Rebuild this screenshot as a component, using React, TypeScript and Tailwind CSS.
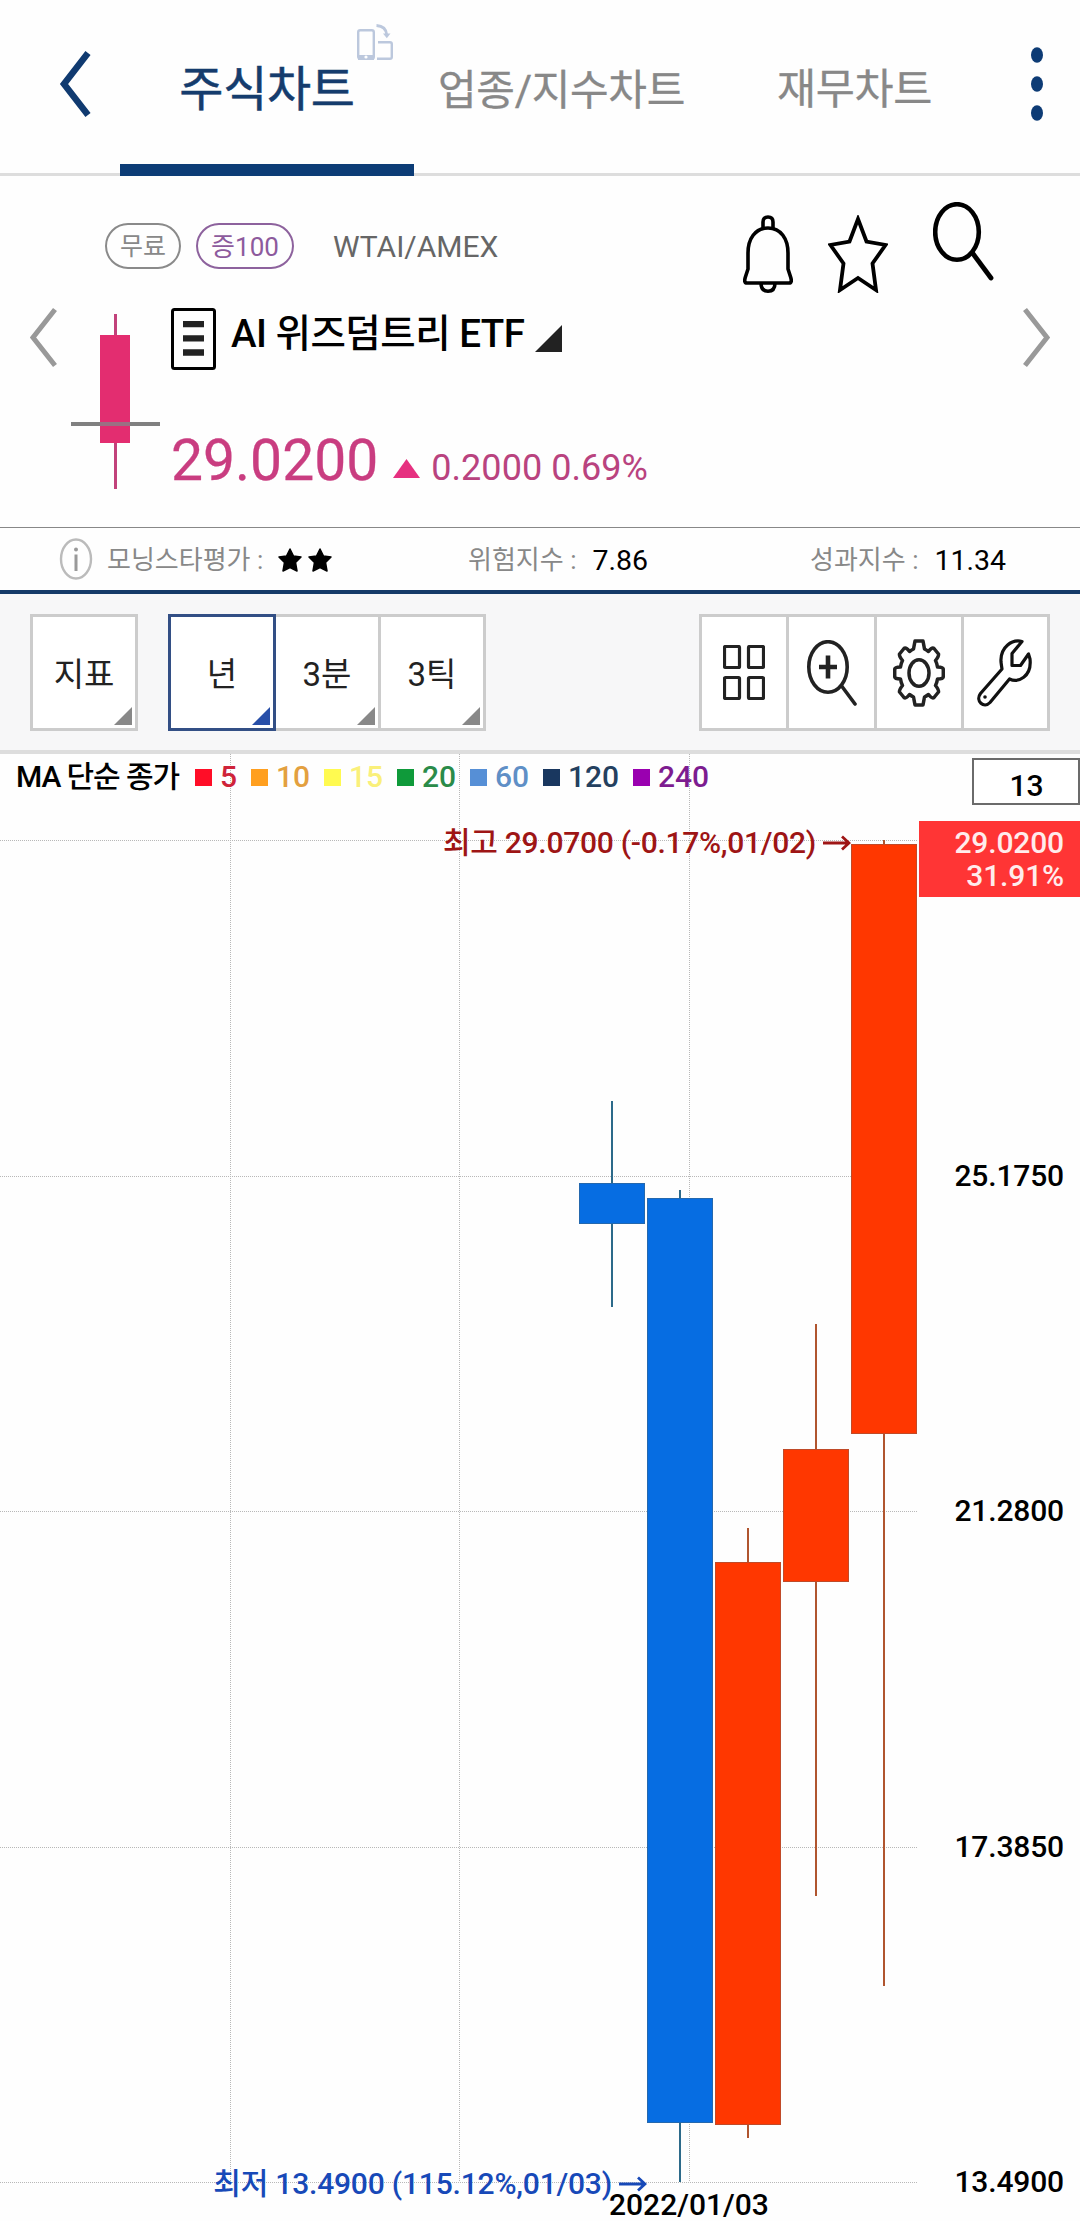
import React from 'react';

const TABS = [
  { label: '주식차트', active: true, cls: 'w-[294px] text-[48px] text-[#153c6d] [-webkit-text-stroke:0.5px]' },
  { label: '업종/지수차트', active: false, cls: 'w-[295px] text-[42px] text-[#888888] [-webkit-text-stroke:0.3px]' },
  { label: '재무차트', active: false, cls: 'w-[291px] text-[42.500px] text-[#888888] [-webkit-text-stroke:0.3px]' },
];

const MA_LINES = [
  { period: 5, box: 'bg-[#ff0d27]', text: 'text-[#cf2339]' },
  { period: 10, box: 'bg-[#ff9f1f]', text: 'text-[#e3a03f]' },
  { period: 15, box: 'bg-[#fffa50]', text: 'text-[#faf07a]' },
  { period: 20, box: 'bg-[#0f9a3a]', text: 'text-[#2a8b49]' },
  { period: 60, box: 'bg-[#568fd6]', text: 'text-[#5f8fc6]' },
  { period: 120, box: 'bg-[#19375f]', text: 'text-[#24405f]' },
  { period: 240, box: 'bg-[#9a00b0]', text: 'text-[#7d1c90]' },
];

const UP = { body: '#ff3700', edge: '#c04a28', wick: '#b0552f' };
const DOWN = { body: '#066de2', edge: '#2468ae', wick: '#2c6a8a' };

// y values are relative to the top of the chart area
const CANDLES = [
  { x: 579, high: 347, top: 429, bottom: 470, low: 553, color: DOWN },
  { x: 647, high: 436, top: 444, bottom: 1369, low: 1428, color: DOWN },
  { x: 715, high: 774, top: 808, bottom: 1371, low: 1384, color: UP },
  { x: 783, high: 570, top: 695, bottom: 828, low: 1142, color: UP },
  { x: 851, high: 86, top: 90, bottom: 680, low: 1232, color: UP },
];

const GRID_Y = [86, 422, 757, 1093, 1428];
const GRID_X = [230, 459, 689];
const AXIS = [
  { label: '25.1750', cls: 'top-[404px]' },
  { label: '21.2800', cls: 'top-[739px]' },
  { label: '17.3850', cls: 'top-[1075px]' },
  { label: '13.4900', cls: 'top-[1410px]' },
];

const Header: React.FC = () => (
  <header className="relative flex h-[176px] border-b-[3px] border-[#dddddd]">
    <button className="w-[120px] shrink-0 pl-[58px]">
      <svg className="-mt-[5px] block" width="34" height="70" viewBox="0 0 34 70" fill="none">
        <path d="M30 4 L6 35 L30 66" stroke="#103a70" strokeWidth="6.5" />
      </svg>
    </button>
    <nav className="flex">
      {TABS.map(tab => (
        <div key={tab.label} className={`relative flex h-[176px] items-center justify-center pt-[4px] tracking-[-0.3px] whitespace-nowrap ${tab.cls}`}>
          {tab.label}
          {tab.active && <span className="absolute bottom-0 left-0 h-3 w-full bg-[#0c3c76]" />}
        </div>
      ))}
    </nav>
    <svg className="absolute top-[23px] left-[356px]" width="38" height="38" viewBox="0 0 38 38" fill="none" stroke="#bcc8dd" strokeWidth="2.4">
      <rect x="2.2" y="7.2" width="15.6" height="28.6" rx="2" />
      <path d="M2 32 H18 V37 H2 Z" fill="#bcc8dd" stroke="none" />
      <circle cx="10" cy="34" r="1.6" fill="#fff" stroke="none" />
      <path d="M22 19.2 H34 Q35.8 19.2 35.8 21 V34 Q35.8 35.8 34 35.8 H21" />
      <path d="M20.5 2.5 Q30 3 30.8 12" strokeWidth="2.8" />
      <path d="M27 10.5 H34.5 L30.8 15.2 Z" fill="#bcc8dd" stroke="none" />
    </svg>
    <button className="ml-auto w-[50px]">
      <svg className="-mt-[5px]" width="14" height="78" viewBox="0 0 14 78" fill="#0d3b75">
        <ellipse cx="7" cy="10" rx="6" ry="7.8" />
        <ellipse cx="7" cy="39" rx="6" ry="7.8" />
        <ellipse cx="7" cy="68" rx="6" ry="7.8" />
      </svg>
    </button>
  </header>
);

const HeaderIcons = () => (
  <div className="flex text-black">
    <svg width="50" height="78" viewBox="0 0 50 78" fill="none" stroke="currentColor" strokeWidth="3.6">
      <path d="M20 13 V7 Q20 2 25 2 Q30 2 30 7 V13" />
      <path d="M25 13 C12 13 5 24 5 38 V54 L2.4 62 Q0.5 68 4 68 H46 Q49.5 68 47.6 62 L45 54 V38 C45 24 38 13 25 13 Z" />
      <path d="M18 68 Q18 76.2 25 76.2 Q32 76.2 32 68" />
    </svg>
    <svg className="ml-[35px]" width="60" height="78" viewBox="0 0 60 78" fill="none" stroke="currentColor" strokeWidth="3.8">
      <path d="M30 4 L38.5 26.5 L57.5 30 L44.5 48.5 L48 75 L30 63 L12 75 L15.5 48.5 L2.5 30 L21.5 26.5 Z" />
    </svg>
    <svg className="-mt-[13px] ml-[45px]" width="62" height="80" viewBox="0 0 62 80" fill="none" stroke="currentColor" strokeWidth="4.6">
      <ellipse cx="24" cy="30" rx="21.8" ry="27.8" />
      <path d="M39.5 51 L58 76" strokeWidth="4.8" strokeLinecap="round" />
    </svg>
  </div>
);

const StockInfo: React.FC = () => (
  <section className="flex h-[352px] border-b border-[#888888]">
    <svg className="mt-[131px] ml-[28px] shrink-0" width="31" height="61" viewBox="0 0 31 61" fill="none">
      <path d="M27 2.5 L5 30.5 L27 58.5" stroke="#999999" strokeWidth="5" />
    </svg>
    <svg className="mt-[138px] ml-3 shrink-0" width="89" height="176" viewBox="0 0 89 176">
      <rect x="43" width="3" height="175" fill="#c2427b" />
      <rect x="29" y="21" width="30" height="108" fill="#e32d70" />
      <rect y="108" width="89" height="4" fill="#808080" />
      <rect x="29" y="108" width="30" height="4" fill="#9c7083" />
    </svg>
    <div className="-ml-[55px] w-[918px]">
      <div className="flex h-[132px] pt-[39px]">
        <div className="mt-2 flex h-[46px] w-[76px] items-center justify-center rounded-full border-2 border-[#8a8a8a] pt-0.5 text-[25px] text-[#888888]">무료</div>
        <div className="mt-2 ml-[15px] flex h-[46px] w-[98px] items-center justify-center rounded-full border-2 border-[#8d629d] pt-0.5 text-[26px] text-[#8d5a9d]">증100</div>
        <div className="mt-[10px] ml-[39px] text-[30px] leading-[44px] text-[#666666]">WTAI/AMEX</div>
        <div className="ml-auto pr-[28px]"><HeaderIcons /></div>
      </div>
      <div className="ml-[66px] flex">
        <svg className="shrink-0" width="45" height="62" viewBox="0 0 45 62" fill="none">
          <rect x="1.5" y="1.5" width="42" height="59" rx="2" stroke="#000" strokeWidth="3" />
          <path d="M12 16.2 H33 M12 30.3 H33 M12 44.5 H33" stroke="#222" strokeWidth="6.3" />
        </svg>
        <h1 className="ml-[15px] pt-px text-[38.500px] leading-[50px] font-medium tracking-[-0.5px] whitespace-nowrap text-black">AI 위즈덤트리 ETF</h1>
        <svg className="mt-[17px] ml-[11px]" width="27" height="27" viewBox="0 0 27 27"><path d="M27 0 V27 H0 Z" fill="#222" /></svg>
      </div>
      <div className="ml-[66px] flex items-baseline text-[#c93d80]">
        <span className="mt-[58px] text-[57px] leading-[66px] [-webkit-text-stroke:0.3px]">29.0200</span>
        <svg className="mr-[11px] ml-[15px]" width="27" height="21" viewBox="0 0 27 21"><path d="M13.5 0 L27 19 H0 Z" fill="#e63080" /></svg>
        <span className="text-[36px] tracking-[0.05px] text-[#b9437f]">0.2000 0.69%</span>
      </div>
    </div>
    <svg className="mt-[131px] -ml-[2px] shrink-0" width="31" height="61" viewBox="0 0 31 61" fill="none">
      <path d="M4 2.5 L26 30.5 L4 58.5" stroke="#999999" strokeWidth="5" />
    </svg>
  </section>
);

const SmallStar = () => (
  <svg width="24" height="24" viewBox="0 0 24 24" fill="#000" stroke="#000" strokeWidth="1.5" strokeLinejoin="round">
    <path d="M12 1 L15.5 8 L23 9 L17.5 14.5 L19 23 L12 19.500 L5 23 L6.5 14.5 L1 9 L8.5 8 Z" />
  </svg>
);

const Rating: React.FC = () => (
  <section className="flex h-[66px] items-center border-b-4 border-[#153a68] text-[26px] whitespace-nowrap text-[#888888]">
    <div className="flex w-[468px] items-center pl-[59px]">
      <svg width="34" height="42" viewBox="0 0 34 42" fill="none" stroke="#bbbbbb" strokeWidth="2.4">
        <ellipse cx="17" cy="21" rx="15" ry="19.5" />
        <path d="M17 16.5 V33" stroke="#999" strokeWidth="3" />
        <circle cx="17" cy="11.5" r="2" fill="#999" stroke="none" />
      </svg>
      <span className="ml-[14px] pt-[3px]">모닝스타평가 :</span>
      <span className="ml-[15px] flex gap-[6px] pt-[2px]"><SmallStar /><SmallStar /></span>
    </div>
    <div className="flex w-[342px] items-center">
      <span className="pt-[3px]">위험지수 :</span>
      <span className="ml-4 pt-[4px] text-[28.500px] text-black">7.86</span>
    </div>
    <div className="flex items-center">
      <span className="pt-[3px]">성과지수 :</span>
      <span className="ml-4 pt-[4px] text-[28.500px] text-black">11.34</span>
    </div>
  </section>
);

const PeriodButton = ({ label, cls, fill }: { label: string; cls: string; fill: string }) => (
  <button className={`relative flex h-[117px] items-center justify-center border-[3px] bg-white pt-[4px] text-[33px] text-[#222222] ${cls}`}>
    {label}
    <svg className="absolute right-[3px] bottom-[3px]" width="18" height="18" viewBox="0 0 18 18"><path d="M18 0 V18 H0 Z" fill={fill} /></svg>
  </button>
);

const Toolbar: React.FC = () => (
  <section className="flex h-[160px] border-b-4 border-[#dddddd] bg-[#f7f7f8] px-[30px] pt-5">
    <PeriodButton label="지표" cls="w-[108px] border-[#cccccc]" fill="#888888" />
    <div className="ml-[30px] flex">
      <PeriodButton label="년" cls="w-[108px] border-[#334f85]" fill="#284fa8" />
      <PeriodButton label="3분" cls="w-[105px] border-l-0 border-[#cccccc]" fill="#888888" />
      <PeriodButton label="3틱" cls="w-[105px] border-l-0 border-[#cccccc]" fill="#888888" />
    </div>
    <div className="ml-auto flex h-[117px] w-[351px] divide-x-[3px] divide-[#cccccc] border-[3px] border-[#cccccc] bg-white">
      <button className="flex flex-1 items-center justify-center">
        <svg width="42" height="55" viewBox="0 0 42 55" fill="none" stroke="#222" strokeWidth="3.2">
          <rect x="1.5" y="1.5" width="15" height="21" rx="1" />
          <rect x="25.5" y="1.5" width="15" height="21" rx="1" />
          <rect x="1.5" y="32.5" width="15" height="21" rx="1" />
          <rect x="25.5" y="32.5" width="15" height="21" rx="1" />
        </svg>
      </button>
      <button className="flex flex-1 items-center justify-center pt-px pl-0.5">
        <svg width="50" height="66" viewBox="0 0 50 66" fill="none" stroke="#222" strokeWidth="3.6">
          <ellipse cx="21" cy="27" rx="19.2" ry="25.3" />
          <path d="M35 46.5 L48 64" strokeLinecap="round" />
          <path d="M12 27 H30 M21 15.500 V38.500" strokeWidth="4.6" />
        </svg>
      </button>
      <button className="flex flex-1 items-center justify-center pt-px">
        <svg width="52" height="68" viewBox="0 0 52 68" fill="none" stroke="#222" strokeWidth="3.5" strokeLinejoin="round">
          <path d="M22 2 H30 L31.5 10 Q33.5 11 35.5 12.5 Q39 8 41 9.5 L45.5 15 Q46 17 42.5 21.5 Q44 24.5 44.5 28 Q50.3 28 50.3 30.5 V37.5 Q50.3 40 44.5 40 Q44 43.5 42.5 46.5 Q46 51 45.5 53 L41 58.5 Q39 60 35.5 55.5 Q33.5 57 31.5 58 L30 66 H22 L20.5 58 Q18.5 57 16.5 55.5 Q13 60 11 58.5 L6.5 53 Q6 51 9.5 46.5 Q8 43.5 7.5 40 Q1.7 40 1.7 37.5 V30.5 Q1.7 28 7.5 28 Q8 24.5 9.5 21.5 Q6 17 6.5 15 L11 9.5 Q13 8 16.5 12.5 Q18.5 11 20.5 10 Z" />
          <ellipse cx="26" cy="34" rx="10" ry="13.3" />
        </svg>
      </button>
      <button className="flex flex-1 items-center justify-center pt-px">
        <svg width="56" height="68" viewBox="0 0 56 68" fill="none" stroke="#111" strokeWidth="3.2" strokeLinejoin="round">
          <path d="M45 2.5 C35 0 23 8 24 23 Q24.5 27 25 30 L3.5 54.5 C-2 62 7 70 13 63.5 L32.5 40 C41 44 55 38 53 20 L51.5 15 L43.5 26.5 H35 V14.5 Z" />
          <circle cx="8" cy="58" r="1.8" fill="#111" stroke="none" />
        </svg>
      </button>
    </div>
  </section>
);

const RightArrow = () => (
  <svg width="28" height="16" viewBox="0 0 28 16" fill="none" stroke="currentColor" strokeWidth="2.8">
    <path d="M0 8 H26 M19 1.5 L26 8 L19 14.5" />
  </svg>
);

const Chart: React.FC = () => (
  <section className="relative h-[1467px] overflow-hidden text-[30px] leading-[36px] font-medium tracking-[-0.15px] whitespace-nowrap text-black">
    <svg className="absolute top-0 left-0" width="1080" height="1467" viewBox="0 0 1080 1467" shapeRendering="crispEdges">
      <g stroke="#b8b8b8" strokeWidth="1" strokeDasharray="1 1">
        {GRID_X.map(x => <line key={x} x1={x + 0.5} y1="0" x2={x + 0.5} y2="1428" />)}
        {GRID_Y.map(y => <line key={y} x1="0" y1={y + 0.5} x2="918" y2={y + 0.5} />)}
      </g>
      {CANDLES.map(c => (
        <g key={c.x}>
          <rect x={c.x + 32} y={c.high} width="2" height={c.low - c.high} fill={c.color.wick} />
          <rect x={c.x} y={c.top} width="66" height={c.bottom - c.top} fill={c.color.edge} />
          <rect x={c.x + 1} y={c.top + 1} width="64" height={c.bottom - c.top - 2} fill={c.color.body} />
        </g>
      ))}
    </svg>

    <div className="relative flex items-center gap-[14px] pt-[5px] pl-4">
      <span className="w-[165px] tracking-[-1.1px]">MA 단순 종가</span>
      {MA_LINES.map(line => (
        <span key={line.period} className="flex items-center gap-2 tracking-[-0.05px]">
          <i className={`size-[17px] ${line.box}`} />
          <span className={line.text}>{line.period}</span>
        </span>
      ))}
    </div>

    <div className="absolute top-1 left-[972px] h-[47px] w-[108px] border-2 border-[#6b6b6b] bg-white pt-[8px] pl-px text-center">13</div>

    <div className="absolute top-[71px] right-[229px] flex items-center gap-[7px] tracking-[-0.28px] text-[#9e1515]">
      최고 29.0700 (-0.17%,01/02)<RightArrow />
    </div>
    <div className="absolute top-[67px] left-[919px] h-[76px] w-[161px] bg-[#ff3535] pt-[5px] pr-4 text-right leading-[33px] text-[#ffecec]">
      29.0200<br />31.91%
    </div>
    {AXIS.map(a => (
      <div key={a.label} className={`absolute right-4 ${a.cls}`}>{a.label}</div>
    ))}
    <div className="absolute top-[1412px] right-[433px] flex items-center gap-[7px] tracking-[-0.2px] text-[#1749b8]">
      최저 13.4900 (115.12%,01/03)<RightArrow />
    </div>
    <div className="absolute top-[1433px] left-[609px] tracking-normal">2022/01/03</div>
  </section>
);

const App: React.FC = () => {
  return (
    <div className="h-[2221px] w-[1080px] overflow-hidden bg-[#fefefe] font-['Roboto','Noto_Sans_CJK_KR',sans-serif]">
      <Header />
      <StockInfo />
      <Rating />
      <Toolbar />
      <Chart />
    </div>
  );
};

export default App;
